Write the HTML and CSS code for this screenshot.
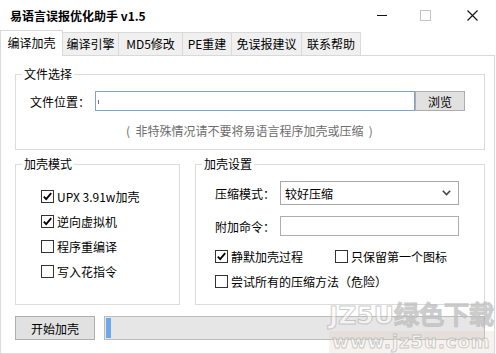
FILE: index.html
```html
<!DOCTYPE html>
<html lang="zh-CN">
<head>
    <meta charset="UTF-8">
    <title>易语言误报优化助手 v1.5</title>
    <link rel="stylesheet" href="styles.css">
</head>
<body>
    <div class="window">
        <div class="titlebar">
            <span class="title">易语言误报优化助手 v1.5</span>
            <div class="controls">
                <span class="ctl min"></span>
                <span class="ctl max"></span>
                <svg class="ctl close" width="11" height="11" viewBox="0 0 11 11">
                    <path d="M0.5 0.5 L10.5 10.5 M10.5 0.5 L0.5 10.5" stroke="#111" stroke-width="1.1" fill="none"/>
                </svg>
            </div>
        </div>

        <div class="tabs">
            <div class="tab active" style="width:63px">编译加壳</div>
            <div class="tab" style="width:57px">编译引擎</div>
            <div class="tab" style="width:65px">MD5修改</div>
            <div class="tab" style="width:50px">PE重建</div>
            <div class="tab" style="width:71px">免误报建议</div>
            <div class="tab" style="width:60px">联系帮助</div>
        </div>

        <div class="panel">
            <fieldset class="group group-file">
                <legend>文件选择</legend>
                <div class="group-body">
                    <div class="file-row">
                        <label class="lbl">文件位置：</label>
                        <div class="text path"><span class="caret"></span></div>
                        <button class="btn browse">浏览</button>
                    </div>
                    <p class="hint">( &nbsp;非特殊情况请不要将易语言程序加壳或压缩 &nbsp;)</p>
                </div>
            </fieldset>

            <div class="groups">
                <fieldset class="group group-mode">
                    <legend>加壳模式</legend>
                    <div class="group-body">
                        <div class="check on">UPX 3.91w加壳</div>
                        <div class="check on">逆向虚拟机</div>
                        <div class="check">程序重编译</div>
                        <div class="check">写入花指令</div>
                    </div>
                </fieldset>

                <fieldset class="group group-set">
                    <legend>加壳设置</legend>
                    <div class="group-body">
                        <div class="form-row">
                            <label class="lbl">压缩模式：</label>
                            <div class="select">
                                <span>较好压缩</span>
                                <svg width="9" height="6" viewBox="0 0 9 6">
                                    <path d="M0.8 0.8 L4.5 4.5 L8.2 0.8" stroke="#444" stroke-width="1.6" fill="none"/>
                                </svg>
                            </div>
                        </div>
                        <div class="form-row second">
                            <label class="lbl">附加命令：</label>
                            <div class="text cmd"></div>
                        </div>
                        <div class="check-row first">
                            <div class="check on quiet">静默加壳过程</div>
                            <div class="check">只保留第一个图标</div>
                        </div>
                        <div class="check-row">
                            <div class="check">尝试所有的压缩方法（危险）</div>
                        </div>
                    </div>
                </fieldset>
            </div>

            <div class="actions">
                <button class="btn start">开始加壳</button>
                <div class="progress"><div class="bar" style="width:5px"></div></div>
            </div>
        </div>

        <div class="watermark">
            <div class="wm-big">JZ5U绿色下载</div>
            <div class="wm-small">www.jz5u.com</div>
        </div>
    </div>
</body>
</html>
```

FILE: styles.css
```css
body {
    margin: 0;
    background-color: #fff;
    font-family: "Noto Sans CJK SC", "Noto Sans", sans-serif;
    font-size: 12px;
    color: #000;
}

.window {
    position: relative;
    width: 496px;
    height: 354px;
    overflow: hidden;
    background-color: #fff;
}

.titlebar {
    height: 31px;
    display: flex;
    align-items: center;
    justify-content: space-between;
}
.title {
    margin-left: 10px;
    font-weight: bold;
    font-size: 12px;
    line-height: 16px;
}
.controls {
    display: flex;
    align-items: center;
    margin-right: 18px;
}
.ctl {
    display: block;
}
.min {
    width: 10px;
    height: 1px;
    background: #111;
}
.max {
    width: 9px;
    height: 9px;
    border: 1px solid #c4c4c4;
    margin-left: 33px;
}
.close {
    margin-left: 36px;
}

.tabs {
    display: flex;
    align-items: flex-end;
    height: 24px;
    position: relative;
    z-index: 1;
}
.tab {
    box-sizing: border-box;
    height: 23px;
    line-height: 21px;
    text-align: center;
    background-color: #f0f0f0;
    border: 1px solid #d9d9d9;
    border-bottom: none;
    margin-right: -1px;
    white-space: nowrap;
}
.tab.active {
    height: 26px;
    line-height: 24px;
    background-color: #fff;
    margin-bottom: -1px;
}

.panel {
    box-sizing: border-box;
    width: 495px;
    height: 299px;
    border: 1px solid #d9d9d9;
    padding: 10px 0 0 14px;
}

.group {
    box-sizing: border-box;
    margin: 0;
    padding: 0;
    border: 1px solid #dcdcdc;
    min-width: 0;
}
.group legend {
    padding: 0 2px;
    margin-left: 6px;
    line-height: 16px;
}

.group-file {
    width: 470px;
    height: 84px;
}
.group-file .group-body {
    padding: 9px 0 0 14px;
}
.file-row {
    display: flex;
    align-items: center;
    height: 20px;
}
.lbl {
    width: 65px;
    white-space: nowrap;
}
.text {
    box-sizing: border-box;
    height: 20px;
    border: 1px solid #abadb3;
    background: #fff;
}
.path {
    width: 320px;
    border-color: #7fa2cc;
    position: relative;
}
.caret {
    position: absolute;
    left: 2px;
    top: 8px;
    width: 1px;
    height: 4px;
    background: #777;
}
.btn {
    box-sizing: border-box;
    font-family: inherit;
    font-size: 12px;
    color: #000;
    background-color: #e1e1e1;
    border: 1px solid #adadad;
    padding: 0;
}
.browse {
    width: 50px;
    height: 20px;
}
.hint {
    margin: 12px 0 0;
    padding-left: 96px;
    line-height: 16px;
    color: #6d6d6d;
}

.groups {
    display: flex;
    gap: 15px;
    margin-top: 6px;
}
.group-mode {
    width: 165px;
    height: 149px;
}
.group-mode .group-body {
    padding: 12px 0 0 25px;
}
.group-set {
    width: 290px;
    height: 149px;
}
.group-set .group-body {
    padding: 9px 0 0 19px;
}

.check {
    display: flex;
    align-items: center;
    height: 25px;
    white-space: nowrap;
}
.check::before {
    content: "";
    box-sizing: border-box;
    width: 13px;
    height: 13px;
    margin-right: 3px;
    border: 1px solid #333;
    background: #fff;
    flex: none;
}
.check.on::before {
    background: #fff url("data:image/svg+xml;utf8,<svg xmlns='http://www.w3.org/2000/svg' width='11' height='11' viewBox='0 0 11 11'><path d='M1.8 5.6 L4.2 8.2 L9.2 2.2' stroke='black' stroke-width='1.8' fill='none'/></svg>") center no-repeat;
}

.form-row {
    display: flex;
    align-items: center;
    height: 24px;
}
.form-row.second {
    margin-top: 11px;
    height: 20px;
}
.select {
    box-sizing: border-box;
    width: 179px;
    height: 24px;
    border: 1px solid #a8a8a8;
    display: flex;
    align-items: center;
    justify-content: space-between;
    padding: 0 7px 0 4px;
}
.cmd {
    width: 179px;
}
.check-row {
    display: flex;
}
.check-row.first {
    margin-top: 8px;
}
.quiet {
    width: 120px;
}

.actions {
    display: flex;
    gap: 9px;
    margin-top: 11px;
}
.start {
    width: 80px;
    height: 24px;
}
.progress {
    box-sizing: border-box;
    width: 381px;
    height: 24px;
    border: 1px solid #bcbcbc;
    background-color: #e6e6e6;
    padding: 1px;
}
.bar {
    height: 100%;
    background-color: #6fa8e6;
}

.watermark {
    position: absolute;
    right: 2px;
    bottom: 1px;
    text-align: center;
    font-family: "DejaVu Sans", sans-serif;
    font-weight: bold;
    color: rgba(255, 255, 255, 0.55);
    -webkit-text-stroke: 1px rgba(170, 170, 170, 0.6);
}
.wm-big {
    font-size: 25px;
    line-height: 30px;
}
.wm-small {
    font-size: 18px;
    line-height: 22px;
    letter-spacing: 1px;
    background: rgba(225, 205, 185, 0.25);
}
```
